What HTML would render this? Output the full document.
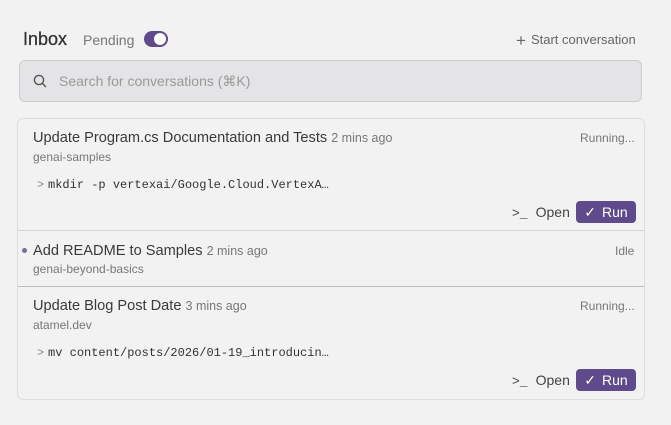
<!DOCTYPE html>
<html><head><style>
*{margin:0;padding:0;box-sizing:border-box}
body{width:671px;height:425px;background:#f2f2f2;font-family:"Liberation Sans",sans-serif;position:relative;overflow:hidden;color:#3a3a3a}
.a{position:absolute;white-space:nowrap}
.t{font-size:14.6px;color:#3a3a3a}
.t span{font-size:12.5px;color:#777}
.r{font-size:12px;color:#777}
.m{font-family:"Liberation Mono",monospace;font-size:12px;color:#333}
.m b{font-family:"Liberation Sans";font-weight:normal;color:#888;margin-right:4px}
.run{background:#5f4a8b;color:#fff;border-radius:4px;font-size:14px;height:22px;width:60px;display:flex;align-items:center;justify-content:center;gap:6px}
.open{font-size:14px;color:#444}
</style></head><body>
<div class="a" style="left:23px;top:29px;font-size:18px;color:#333;-webkit-text-stroke:0.3px #333">Inbox</div>
<div class="a" style="left:83px;top:32px;font-size:14px;color:#777">Pending</div>
<div class="a" style="left:144px;top:31px;width:24px;height:16px;border-radius:8px;background:#5f4a8b"><div style="position:absolute;right:2px;top:2px;width:12px;height:12px;border-radius:50%;background:#fff"></div></div>
<div class="a" style="left:516px;top:31px;font-size:13px;color:#666"><span style="font-size:17px;vertical-align:-2px;margin-right:5px">+</span>Start conversation</div>
<div class="a" style="left:19px;top:60px;width:623px;height:42px;background:#e4e4e6;border:1px solid #ccc;border-radius:6px"></div>
<svg class="a" style="left:33px;top:74px" width="14" height="14" viewBox="0 0 14 14" fill="none" stroke="#555" stroke-width="1.4"><circle cx="6" cy="6" r="4.6"/><path d="M9.4 9.4 13 13"/></svg>
<div class="a" style="left:59px;top:73px;font-size:14px;color:#999">Search for conversations (⌘K)</div>
<div class="a" style="left:17px;top:118px;width:628px;height:282px;border:1px solid #ddd;border-radius:6px"></div>
<div class="a" style="left:18px;top:230px;width:626px;height:1px;background:#d6d6d6"></div>
<div class="a" style="left:18px;top:286px;width:626px;height:1px;background:#bbb"></div>

<div class="a t" style="left:33px;top:130px">Update Program.cs Documentation and Tests <span>2 mins ago</span></div>
<div class="a r" style="left:33px;top:150px">genai-samples</div>
<div class="a r" style="left:580px;top:131px">Running...</div>
<div class="a m" style="left:37px;top:177px"><b>&gt;</b>mkdir -p vertexai/Google.Cloud.VertexA…</div>
<div class="a open" style="left:512px;top:204px"><span style="font-family:'Liberation Mono';font-size:13px;margin-right:8px">&gt;_</span>Open</div>
<div class="a run" style="left:576px;top:201px"><span>✓</span>Run</div>

<div class="a" style="left:22px;top:248px;width:5px;height:5px;border-radius:50%;background:#7a6aa0"></div>
<div class="a t" style="left:33px;top:243px">Add README to Samples <span>2 mins ago</span></div>
<div class="a r" style="left:33px;top:262px">genai-beyond-basics</div>
<div class="a r" style="left:615px;top:244px">Idle</div>

<div class="a t" style="left:33px;top:298px">Update Blog Post Date <span>3 mins ago</span></div>
<div class="a r" style="left:33px;top:318px">atamel.dev</div>
<div class="a r" style="left:580px;top:299px">Running...</div>
<div class="a m" style="left:37px;top:345px"><b>&gt;</b>mv content/posts/2026/01-19_introducin…</div>
<div class="a open" style="left:512px;top:372px"><span style="font-family:'Liberation Mono';font-size:13px;margin-right:8px">&gt;_</span>Open</div>
<div class="a run" style="left:576px;top:369px"><span>✓</span>Run</div>
</body></html>
